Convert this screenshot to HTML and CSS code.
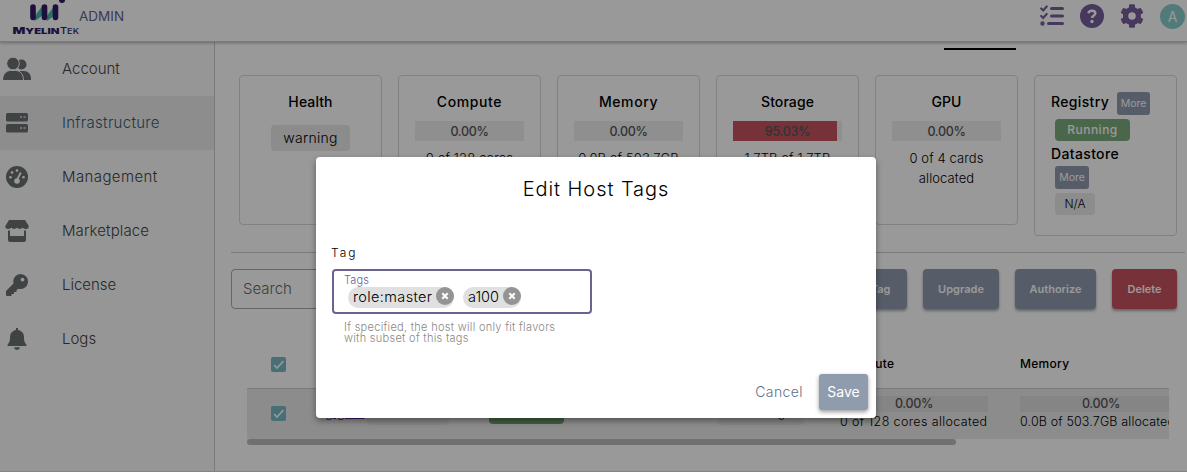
FILE: index.html
```
<!DOCTYPE html>
<html lang="en">
<head>
<meta charset="utf-8">
<title>MyelinTek Admin</title>
<link rel="stylesheet" href="styles.css">
</head>
<body>
<div class="app">
  <header class="topbar">
    <svg class="logo" width="70" height="41" viewBox="0 0 70 41">
      <path d="M23 17 32 5v10L24 21zM35 17l9-12v10l-8 6z" fill="#45b8ac"/>
      <path d="M22 7v10.500M33.500 7v10.500M44.500 7v10.500" stroke="#331a66" stroke-width="5.600" stroke-linecap="round"/>
      <circle cx="51" cy="0" r="3" fill="#331a66"/>
      <text class="logo-bold" x="1.500" y="34" textLength="47" lengthAdjust="spacingAndGlyphs"><tspan font-size="9.500">M</tspan>YELIN</text>
      <text class="logo-thin" x="49" y="34" textLength="19" lengthAdjust="spacingAndGlyphs"><tspan font-size="9.500">T</tspan>EK</text>
    </svg>
    <span class="brand">ADMIN</span>
    <nav class="tools">
      <svg width="24" height="22" viewBox="0 0 24 22" fill="none" stroke="#765f9c" stroke-linecap="round"><path d="M11.500 3.500h11M11.500 11h11M8.500 18.500h14" stroke-width="3"/><path d="m1.200 3.500 2 2 3.500-4M1.200 11l2 2 3.500-4" stroke-width="2.200"/><circle cx="2.500" cy="18.500" r="1.200" stroke-width="2"/></svg>
      <svg width="24" height="24" viewBox="0 0 24 24"><circle cx="12" cy="12" r="12" fill="#765f9c"/><path d="M8.500 9.200C9 5.800 15.300 5.800 15.300 9.300c0 2.600-3.300 2.300-3.300 4.700" fill="none" stroke="#fff" stroke-width="2.500"/><circle cx="12" cy="17.500" r="1.700" fill="#fff"/></svg>
      <svg width="24" height="24" viewBox="0 0 512 512" fill="#765f9c"><path d="M487 316l-43-25c4-23 4-47 0-70l43-25c5-3 7-9 6-14-11-36-30-69-55-96-4-4-10-5-15-2l-43 24c-18-15-38-27-60-35V24c0-6-4-11-9-12-36-8-74-8-110 0-6 1-10 6-10 12v49c-22 8-42 20-60 35L88 84c-5-3-11-2-15 2-25 27-44 60-55 96-2 5 0 11 5 14l43 25c-4 23-4 47 0 70l-43 25c-5 3-7 9-5 14 11 36 30 69 55 96 4 4 10 5 15 2l43-24c18 15 38 27 60 35v49c0 6 4 11 10 12 36 8 74 8 110 0 5-1 9-6 9-12v-49c22-8 42-20 60-35l43 24c5 3 11 2 15-2 25-27 44-60 55-96 1-5-1-11-6-14zM256 336a80 80 0 1 1 0-160 80 80 0 0 1 0 160z" fill-rule="evenodd"/></svg>
      <span class="avatar">A</span>
    </nav>
  </header>
  <div class="body">
    <aside class="sidebar">
      <a class="item"><svg width="28" height="24" viewBox="0 0 28 24"><circle cx="18.500" cy="7.500" r="5"/><path d="M16 14h5c4 0 7 3 7 8v1H16z"/><g stroke="#fafafa" stroke-width="1"><circle cx="10" cy="6.500" r="6.300"/><path d="M-.5 23.500c0-6.500 4-10 8-10h5c5 0 8 4 8 10z"/></g></svg><span>Account</span></a>
      <a class="item active"><svg width="28" height="24" viewBox="0 0 28 24"><rect x="3" y="2" width="22" height="8.500" rx="1.500"/><rect x="3" y="13" width="22" height="8.500" rx="1.500"/><path d="M17 6h2m1.500 0h2M17 17h2m1.500 0h2" stroke="#ddd" stroke-width="1.500"/></svg><span class="w2">Infrastructure</span></a>
      <a class="item"><svg width="28" height="24" viewBox="0 0 28 24"><circle cx="14" cy="12" r="11"/><g fill="#fff"><circle cx="14" cy="5.500" r="1.300"/><circle cx="9" cy="7.500" r="1.300"/><circle cx="7.500" cy="12.200" r="1.300"/><circle cx="20.500" cy="12.200" r="1.300"/><circle cx="14" cy="16" r="2.800"/></g><path d="m14 15 3.800-7.500" stroke="#fff" stroke-width="1.700"/></svg><span class="w3">Management</span></a>
      <a class="item"><svg width="28" height="24" viewBox="0 0 28 24"><path d="M6 1h16l3.500 5.500c1 2-1 4-3 3.500-1.500 0-2-.5-2.800-1.200-1.500 1.500-4 1.500-5.700 0-1.500 1.500-4.200 1.500-5.700 0C6.500 10.500 2 10.500 2.200 7.200zM5 11.500h2V17h14v-5.500h2V21q0 2-2 2H7q-2 0-2-2z"/></svg><span class="w1">Marketplace</span></a>
      <a class="item"><svg width="28" height="24" viewBox="0 0 28 24"><path d="M17.500 1a7.500 7.500 0 1 1-2 14.700L13.500 17v2h-2.500v2H8.500v2H4q-1 0-1-1v-4l7.500-7.500A7.500 7.500 0 0 1 17.500 1zm2 3.700a1.900 1.900 0 1 0 0 3.800 1.900 1.900 0 0 0 0-3.800z" fill-rule="evenodd"/></svg><span>License</span></a>
      <a class="item"><svg width="28" height="24" viewBox="0 0 28 24"><path d="M13 1h2v2c4 .7 6 3.500 6 7.500 0 4.500 1.200 5.500 2.200 6.700.7 1 .2 1.800-.8 1.800H5.600c-1 0-1.500-.8-.8-1.800C5.800 16 7 15 7 10.500 7 6.500 9 3.700 13 3zM11.200 20.200h5.600c0 3.500-5.600 3.500-5.600 0z"/></svg><span>Logs</span></a>
    </aside>
    <main class="main">
      <div class="tabs"><span class="tab-line"></span></div>
      <section class="cards">
        <article class="card"><h3>Health</h3><span class="pill">warning</span></article>
        <article class="card"><h3 class="wide">Compute</h3><div class="meter">0.00%</div><p>0 of 128 cores allocated</p></article>
        <article class="card"><h3 class="wide">Memory</h3><div class="meter">0.00%</div><p>0.0B of 503.7GB allocated</p></article>
        <article class="card"><h3>Storage</h3><div class="meter full">95.03%</div><p>1.7TB of 1.7TB allocated</p></article>
        <article class="card"><h3>GPU</h3><div class="meter">0.00%</div><p>0 of 4 cards allocated</p></article>
        <article class="card services">
          <div class="service"><h3>Registry</h3><button class="more">More</button></div>
          <span class="status running">Running</span>
          <h3>Datastore</h3>
          <button class="more second">More</button>
          <span class="status na">N/A</span>
        </article>
      </section>
      <section class="actions">
        <div class="search">Search</div>
        <button class="btn">Edit Tag</button>
        <button class="btn upgrade">Upgrade</button>
        <button class="btn authorize">Authorize</button>
        <button class="btn delete">Delete</button>
      </section>
      <section class="table">
        <div class="row head">
          <div class="c-check"><svg class="check" viewBox="0 0 15 15"><path d="m3 8 3 3 6.500-7"/></svg></div>
          <div class="c-name"></div><div class="c-status"></div><div class="c-tags"></div>
          <div class="c-compute">Compute</div><div class="c-memory">Memory</div>
        </div>
        <div class="row host">
          <div class="c-check"><svg class="check" viewBox="0 0 15 15"><path d="m3 8 3 3 6.500-7"/></svg></div>
          <div class="c-name"><a class="link">gigaio</a><span class="chip">master</span></div>
          <div class="c-status"><span class="chip ready">Ready</span></div>
          <div class="c-tags"><span class="chip tagchip">warning</span></div>
          <div class="c-compute"><div class="meter small">0.00%</div><span class="usage">0 of 128 cores allocated</span></div>
          <div class="c-memory"><div class="meter small">0.00%</div><span class="usage mem">0.0B of 503.7GB allocated</span></div>
        </div>
        <div class="scroll"></div>
      </section>
    </main>
  </div>
</div>
<div class="overlay">
  <div class="dialog">
    <h2>Edit Host Tags</h2>
    <div class="field-name">Tag</div>
    <div class="field">
      <span class="label">Tags</span>
      <div class="tags">
        <span class="tag t1"><span>role:master</span><svg viewBox="0 0 18 18"><circle cx="9" cy="9" r="9"/><path d="m6.300 6.300 5.400 5.400m0-5.400-5.400 5.400"/></svg></span>
        <span class="tag t2"><span>a100</span><svg viewBox="0 0 18 18"><circle cx="9" cy="9" r="9"/><path d="m6.300 6.300 5.400 5.400m0-5.400-5.400 5.400"/></svg></span>
      </div>
    </div>
    <p class="hint">If specified, the host will only fit flavors<br>with subset of this tags</p>
    <div class="buttons"><button class="cancel">Cancel</button><button class="save">Save</button></div>
  </div>
</div>
</body>
</html>
```
FILE: styles.css
```
* { box-sizing: border-box; }
body { margin: 0; overflow: hidden; font-family: Inter, "Open Sans", sans-serif; font-weight: 300; color: #000; background: #fff; }
h2, h3, p { margin: 0; }
button { font: inherit; border: 0; padding: 0; }
svg { flex: none; }
.app { width: 1187px; height: 472px; display: flex; flex-direction: column; border-bottom: 1px solid #ddd; }
.topbar { height: 42px; flex: none; display: flex; position: relative; border-bottom: 1px solid #ccc; box-shadow: 0 1px 3px rgba(0,0,0,.3); }
.logo { margin-left: 11px; overflow: hidden; }
.logo text { font-size: 8px; fill: #331a66; }
.logo-bold { font-weight: 900; }
.logo-thin { font-weight: 500; }
.brand { font-size: 13.500px; font-weight: 400; line-height: 32px; margin-left: -2px; color: #655f91; }
.tools { margin-left: auto; display: flex; align-items: center; height: 32px; gap: 16px; margin-right: 2px; }
.avatar { width: 25px; height: 25px; border-radius: 50%; background: #86cdca; color: #fff; text-align: center; font-size: 14px; line-height: 25px; font-weight: 400; }
.body { flex: 1; display: flex; min-height: 0; }
.sidebar { width: 215px; flex: none; border-right: 1px solid #ccc; background: #fafafa; }
.item { height: 54px; display: flex; align-items: center; gap: 31px; padding-left: 3px; font-size: 15px; color: #444; }
.item span { padding-bottom: 2px; }
.item svg { fill: #6a7070; }
.item.active { background: #ebebeb; color: #355d75; }
.w1 { letter-spacing: .1px; }
.w2 { letter-spacing: .3px; }
.w3 { letter-spacing: .4px; }
.main { width: 972px; padding: 0 10px 0 16px; }
.tabs { height: 33px; padding: 6px 0 0 713px; }
.tab-line { display: block; width: 72px; height: 2px; background: #000; }
.cards { display: flex; align-items: flex-start; gap: 16px; padding-left: 8px; height: 177px; }
.card { width: 143px; height: 150px; border: 1px solid #d8d8d8; border-radius: 4px; padding: 15px 16px; display: flex; flex-direction: column; align-items: center; font-size: 13px; }
h3 { font-size: 14px; font-weight: 500; line-height: 22px; letter-spacing: .1px; }
h3.wide { letter-spacing: .6px; }
.meter { width: 100%; height: 20px; line-height: 21px; margin-top: 8px; text-align: center; font-size: 12.500px; letter-spacing: -.3px; font-weight: 500; color: #555; background: #efefef; }
.meter.full { background: linear-gradient(to right, #c6535f 95.03%, #efefef 95.03%); }
.card p { text-align: center; line-height: 20px; margin-top: 7px; width: 112px; letter-spacing: .1px; }
.pill { width: 79px; height: 26px; line-height: 26px; margin-top: 12px; text-align: center; border-radius: 4px; background: #eaeaea; font-size: 14px; letter-spacing: .3px; }
.services { height: 161px; align-items: flex-start; }
.service { display: flex; gap: 8px; height: 23px; padding-top: 0; }
.service h3, .services > h3 { letter-spacing: .35px; white-space: nowrap; }
.more { width: 33px; height: 23px; border-radius: 3px; background: #8f9cad; color: #fff; font-size: 10.500px; font-weight: 400; margin-top: 1px; flex: none; }
.status { margin: 4px 0 0 4px; width: 75px; height: 22px; line-height: 22px; border-radius: 4px; text-align: center; font-size: 12px; letter-spacing: .5px; font-weight: 500; }
.running { margin-top: 5px; background: #7eac7e; color: #fff; }
.services > h3 { margin-top: 2px; }
.second { width: 34px; margin-left: 4px; }
.na { width: 40px; background: #eaeaea; font-weight: 300; letter-spacing: 0; }
.actions { display: flex; gap: 16px; height: 74px; border-top: 1px solid #ccc; padding-top: 16px; margin-right: -8px; padding-right: 8px; }
.search { width: 500px; height: 40px; line-height: 38px; padding-left: 11px; border: 1px solid #aaa; border-radius: 4px; font-size: 15px; color: #666; margin-right: auto; }
.btn { width: 76px; height: 40px; border-radius: 4px; background: #8f9cad; color: #fff; font-size: 11px; font-weight: 600; box-shadow: 0 2px 3px rgba(0,0,0,.35); }
.authorize { width: 81px; }
.delete { width: 65px; background: #c6535f; }
.table { margin-left: 16px; width: 922px; overflow: hidden; }
.row { display: flex; width: 1000px; font-size: 12.500px; }
.head { height: 62px; align-items: center; padding-top: 14px; font-size: 12px; font-weight: 500; letter-spacing: .3px; }
.head .c-compute, .head .c-memory { padding-bottom: 2px; }
.host { height: 51px; background: #eaeaea; border-top: 1px solid #ccc; }
.c-check { width: 78px; padding-left: 24px; }
.host .c-check { padding-top: 17px; }
.check { display: block; width: 15px; height: 15px; border-radius: 2px; background: #78b8c5; fill: none; stroke: #fff; stroke-width: 1.600; }
.c-name { width: 164px; display: flex; align-items: flex-start; }
.c-status { width: 229px; }
.c-tags { width: 122px; }
.c-compute { width: 180px; padding-right: 32px; white-space: nowrap; }
.c-memory { width: 194px; padding-right: 32px; white-space: nowrap; }
.usage { letter-spacing: .37px; }
.usage.mem { letter-spacing: .15px; }
.link { width: 42px; padding-top: 14px; font-size: 14px; color: #5d20a5; text-decoration: underline; }
.chip { display: block; width: 82px; height: 26px; line-height: 22px; margin-top: 10px; border-radius: 4px; text-align: center; background: #e0e0e0; font-size: 13px; }
.ready { width: 75px; margin-top: 9px; color: #fff; background: #6f9f70; line-height: 18px; }
.tagchip { width: 86px; line-height: 26px; }
.small { height: 16px; line-height: 16px; margin: 7px 0 2px; background: #dedede; }
.scroll { width: 709px; height: 6px; border-radius: 3px; background: #bbb; }
.overlay { position: absolute; inset: 0; display: flex; justify-content: center; align-items: flex-start; padding: 157px 0 0 5px; background: rgba(0,0,0,.4); }
.dialog { width: 560px; height: 261px; background: #fff; border-radius: 4px; padding: 16px; display: flex; flex-direction: column; box-shadow: 0 3px 6px rgba(0,0,0,.4); }
h2 { text-align: center; font-size: 20px; line-height: 32px; font-weight: 300; letter-spacing: .95px; }
.field-name { margin-top: 38px; margin-left: -1px; height: 26px; line-height: 20px; font-size: 12px; letter-spacing: 2px; }
.field { width: 260px; height: 45px; border: 2px solid #6d6191; border-radius: 4px; padding: 3px 10px 0; }
.label { display: block; font-size: 11px; line-height: 13px; letter-spacing: .1px; color: #6d6191; }
.tags { display: flex; gap: 9px; padding-left: 4px; }
.tag { display: flex; align-items: flex-start; justify-content: space-between; height: 21px; line-height: 20px; border-radius: 11px; background: #e0e0e0; padding-left: 5px; font-size: 14.500px; }
.t1 { width: 106px; letter-spacing: .37px; }
.t2 { width: 58px; }
.tag svg { width: 18px; height: 18px; fill: #949494; stroke-width: 2; }
.tag path { stroke: #fff; }
.hint { margin: 8px 0 0 12px; font-size: 11px; line-height: 11px; letter-spacing: .29px; color: #888; }
.buttons { margin: auto -8px -8px 0; display: flex; justify-content: flex-end; gap: 16px; }
.buttons button { height: 36px; font-size: 14px; border-radius: 3px; padding-bottom: 1px; }
.buttons .cancel { background: none; color: #60708a; letter-spacing: .4px; }
.save { width: 49px; background: #8f9cae; color: #fff; font-weight: 400; box-shadow: 0 2px 4px rgba(0,0,0,.4); }
```
